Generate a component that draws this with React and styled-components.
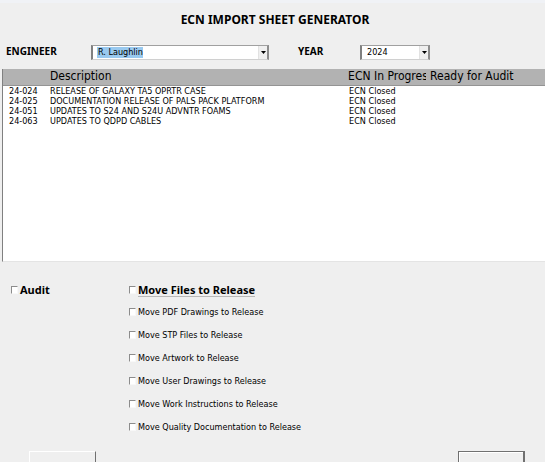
import React from "react";
import styled, { createGlobalStyle, css } from "styled-components";

const displayFont = `Tahoma, "Noto Sans", sans-serif`;

const GlobalStyle = createGlobalStyle`
  * { box-sizing: border-box; }
  body {
    margin: 0;
    background: #efefef;
    color: #000;
    font-family: Tahoma, "DejaVu Sans Condensed", sans-serif;
    font-size: 9px;
    line-height: 11px;
  }
`;

const Form = styled.form`
  height: 100vh;
  overflow: hidden;
  border-top: 3px solid #f0f2f6;
`;

const Title = styled.h1`
  margin: 10px 0 0;
  padding-left: 5px;
  font-family: ${displayFont};
  font-size: 12px;
  line-height: 14px;
  font-weight: 700;
  text-align: center;
`;

const Filters = styled.div`
  display: grid;
  grid-template-columns: 85px minmax(100px, 178px) 91px minmax(60px, 70px);
  align-items: center;
  padding: 18px 6px 9px;
`;

const FieldLabel = styled.label`
  font-family: ${displayFont};
  font-size: 10px;
  line-height: 12px;
  font-weight: 700;
  padding-left: ${(p) => (p.$inset ? "29px" : "0")};
  padding-bottom: 3px;
`;

const Combo = styled.div`
  display: flex;
  height: 15px;
  background: #fff;
  border: 1px solid #a0a0a0;
  border-left: 2px solid #808080;
  border-right: 2px solid #8c8c8c;
  border-bottom-color: #d0d0d0;
  position: relative;
`;

const ComboSelect = styled.select`
  appearance: none;
  flex: 1;
  min-width: 0;
  padding: 0 12px 0 5px;
  border: 0;
  outline: 0;
  font: inherit;
  line-height: 13px;
  color: #000;
  background: transparent;
  ${(p) =>
    p.$highlighted &&
    css`
      background: linear-gradient(#99c9ef, #99c9ef) 4px 1px / 46px 11px no-repeat;
    `}
`;

const ComboArrow = styled.span`
  position: absolute;
  inset: 0 0 0 auto;
  width: 9px;
  display: grid;
  place-items: center;
  background: #efefef;
  border-left: 1px solid #e2e2e2;
  pointer-events: none;
`;

const List = styled.div`
  height: 193px;
  margin-left: 2px;
  background: #fff;
  border-bottom: 1px solid #e4e4e4;
  border-left: 1px solid #808080;
`;

const Table = styled.table`
  width: 100%;
  table-layout: fixed;
  border-collapse: collapse;
  text-align: left;

  th, td {
    padding: 0;
    font-weight: 400;
    white-space: nowrap;
  }
`;

const Column = styled.col`
  width: ${(p) => p.$width};
`;

const HeadRow = styled.tr`
  height: 16px;
  background: #b2b2b2;
  border-bottom: 1px solid #949494;
  font-size: 12px;
  line-height: 15px;
`;

const HeadText = styled.span`
  display: block;
  margin-right: 4px;
  overflow: hidden;
`;

const BodyRow = styled.tr`
  line-height: 10px;

  td:first-child { padding-left: 6px; }
  td:nth-child(3) { padding-left: 1px; }
`;

const Options = styled.div`
  display: grid;
  grid-template-columns: 118px 1fr;
  align-items: start;
  padding: 21px 10px 0 11px;
`;

const OptionList = styled.div`
  display: flex;
  flex-direction: column;
  gap: 9px;
`;

const CheckLabel = styled.label`
  display: flex;
  align-items: center;
  gap: 2px;
  height: 14px;
  white-space: nowrap;
  ${(p) =>
    p.$heading &&
    css`
      height: 13px;
      font-family: ${displayFont};
      font-size: 11px;
      line-height: 13px;
      font-weight: 700;
    `}
`;

const CheckText = styled.span`
  border-bottom: ${(p) => (p.$underlined ? "1px solid #b8b8b8" : "0")};
`;

const Check = styled.input`
  appearance: none;
  flex: none;
  width: 7px;
  height: 8px;
  margin: 0;
  background: #fff;
  border: 1px solid #f8f8f8;
  border-top-color: #8c8c8c;
  border-left-color: #8c8c8c;

  &:checked { background: #404040; }
`;

const Actions = styled.div`
  display: flex;
  justify-content: space-between;
  padding: 17px 20px 0 29px;
`;

const ActionButton = styled.button`
  width: 67px;
  height: 26px;
  background: #efefef;
  border: 1px solid #fff;
  border-right: 1px solid #707070;
  border-bottom-color: #707070;
  ${(p) =>
    p.$primary &&
    css`
      border: 1px solid #707070;
      border-right-width: 2px;
      box-shadow: inset 1px 1px #fff;
    `}
`;

const records = [
  ["24-024", "RELEASE OF GALAXY TA5 OPRTR CASE", "ECN Closed"],
  ["24-025", "DOCUMENTATION RELEASE OF PALS PACK PLATFORM", "ECN Closed"],
  ["24-051", "UPDATES TO S24 AND S24U ADVNTR FOAMS", "ECN Closed"],
  ["24-063", "UPDATES TO QDPD CABLES", "ECN Closed"],
];

const releaseOptions = [
  "Move PDF Drawings to Release",
  "Move STP Files to Release",
  "Move Artwork to Release",
  "Move User Drawings to Release",
  "Move Work Instructions to Release",
  "Move Quality Documentation to Release",
];

function ComboBox({ id, value, highlighted }) {
  return (
    <Combo>
      <ComboSelect id={id} defaultValue={value} $highlighted={highlighted}>
        <option>{value}</option>
      </ComboSelect>
      <ComboArrow>
        <svg width="5" height="3" viewBox="0 0 5 3" aria-hidden="true">
          <path d="M0 0h5L2.5 3z" fill="#000" />
        </svg>
      </ComboArrow>
    </Combo>
  );
}

function CheckOption({ children, heading, underlined }) {
  return (
    <CheckLabel $heading={heading}>
      <Check type="checkbox" />
      <CheckText $underlined={underlined}>{children}</CheckText>
    </CheckLabel>
  );
}

export default function App() {
  return (
    <>
      <GlobalStyle />
      <Form>
        <Title>ECN IMPORT SHEET GENERATOR</Title>
        <Filters>
          <FieldLabel htmlFor="engineer">ENGINEER</FieldLabel>
          <ComboBox id="engineer" value="R. Laughlin" highlighted />
          <FieldLabel htmlFor="year" $inset>YEAR</FieldLabel>
          <ComboBox id="year" value="2024" />
        </Filters>
        <List>
          <Table>
            <colgroup>
              <Column $width="47px" />
              <Column $width="55%" />
              <Column $width="82px" />
              <Column />
            </colgroup>
            <thead>
              <HeadRow>
                <th aria-label="Number" />
                <th><HeadText>Description</HeadText></th>
                <th><HeadText>ECN In Progress</HeadText></th>
                <th><HeadText>Ready for Audit</HeadText></th>
              </HeadRow>
            </thead>
            <tbody>
              {records.map(([number, description, status]) => (
                <BodyRow key={number}>
                  <td>{number}</td>
                  <td>{description}</td>
                  <td>{status}</td>
                  <td />
                </BodyRow>
              ))}
            </tbody>
          </Table>
        </List>
        <Options>
          <CheckOption heading>Audit</CheckOption>
          <OptionList>
            <CheckOption heading underlined>Move Files to Release</CheckOption>
            {releaseOptions.map((text) => (
              <CheckOption key={text}>{text}</CheckOption>
            ))}
          </OptionList>
        </Options>
        <Actions>
          <ActionButton type="button" aria-label="Generate" />
          <ActionButton type="button" aria-label="Close" $primary />
        </Actions>
      </Form>
    </>
  );
}
